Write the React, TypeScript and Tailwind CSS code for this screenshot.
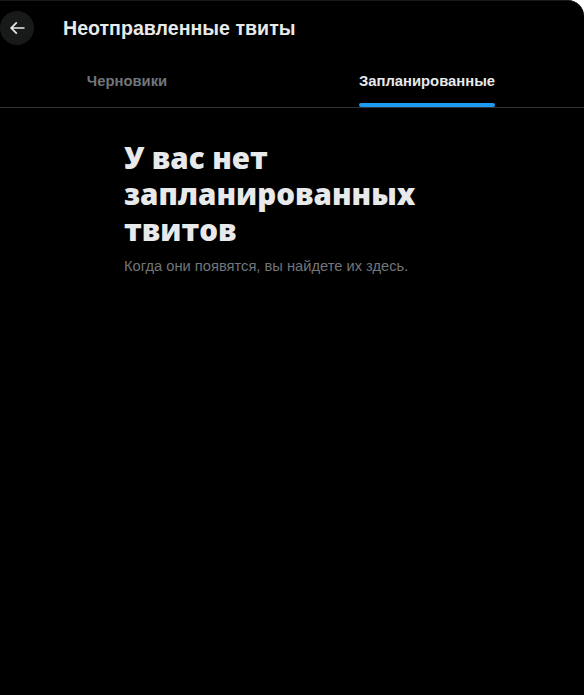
import { useState } from "react";

const tabs = ["Черновики", "Запланированные"];

function BackArrow() {
  return (
    <svg viewBox="0 0 24 24" className="h-5 w-5 fill-[#e7e9ea]">
      <path d="M7.414 13l5.043 5.04-1.414 1.42L3.586 12l7.457-7.46 1.414 1.42L7.414 11H21v2H7.414z" />
    </svg>
  );
}

export default function App() {
  const [active, setActive] = useState(1);

  return (
    <div
      className="min-h-[695px] w-full overflow-hidden rounded-tr-2xl border-t border-[#16181b] bg-black text-[#e7e9ea]"
      style={{ fontFamily: '"Liberation Sans", Arial, sans-serif' }}
    >
      {/* header */}
      <div className="flex h-[53px] items-center">
        <button className="flex h-[34px] w-[34px] items-center justify-center rounded-full bg-[#181919]">
          <BackArrow />
        </button>
        <h2 className="ml-[29px] text-[19.6px] font-bold leading-6 text-[#e7e9ea]">
          Неотправленные твиты
        </h2>
      </div>

      {/* tabs */}
      <div className="flex h-[54px] border-b border-[#2f3336]">
        {tabs.map((t, i) => (
          <button
            key={t}
            onClick={() => setActive(i)}
            className={
              "flex h-full shrink-0 justify-center " +
              (i === 0 ? "w-[254px]" : "w-[346px]")
            }
          >
            <div className="relative flex h-full flex-col justify-center">
              <span
                className={
                  "text-[14.8px] font-bold leading-5 " +
                  (active === i ? "text-[#e7e9ea]" : "text-[#71767b]")
                }
              >
                {t}
              </span>
              {active === i && (
                <div className="absolute bottom-0 left-0 h-1 w-full rounded-full bg-[#1d9bf0]" />
              )}
            </div>
          </button>
        ))}
      </div>

      {/* empty state */}
      <div className="mx-auto my-8 max-w-[400px] px-8">
        <h1 className="font-['Open_Sans',sans-serif] text-[29.5px] font-extrabold leading-9 text-[#e7e9ea]">
          У вас нет запланированных твитов
        </h1>
        <p className="mt-2 text-[14.7px] leading-5 text-[#71767b]">
          Когда они появятся, вы найдете их здесь.
        </p>
      </div>
    </div>
  );
}
